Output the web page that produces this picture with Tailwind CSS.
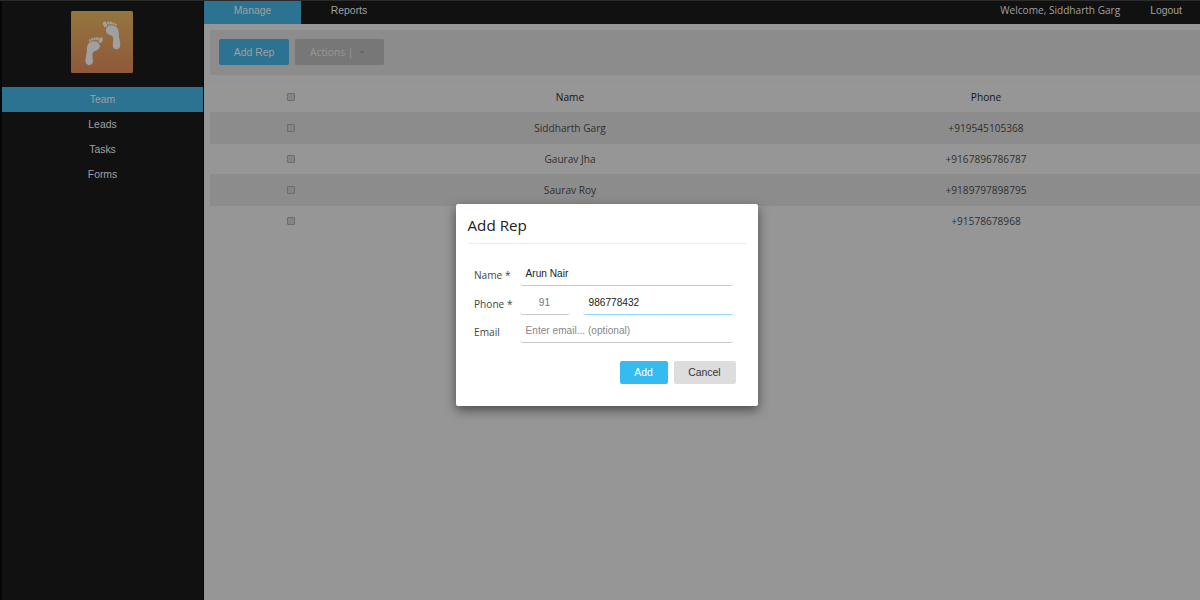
<!DOCTYPE html>
<html lang="en">
<head>
<meta charset="utf-8">
<title>Team</title>
<script src="https://cdn.jsdelivr.net/npm/@tailwindcss/browser@4"></script>
</head>
<body class="h-[600px] w-[1200px] overflow-hidden bg-[#969696] font-['Open_Sans',sans-serif] text-[10.15px] text-[#303030]">
<div class="flex h-full w-full border-t border-[#2b2b2b]">
  <aside class="flex w-[204px] shrink-0 flex-col border-l-2 border-r border-l-[#050505] border-r-[#050505] bg-[#111111] text-center font-['Liberation_Sans',sans-serif] text-[10.4px] text-[#a0a0a0]">
    <div class="flex h-[85.500px] justify-center pr-[1px] pt-[9.5px]">
      <svg class="h-[62px] w-[62px]" viewBox="0 0 62 62">
        <defs><linearGradient id="g" x1="0" y1="0" x2="0" y2="1"><stop offset="0" stop-color="#94763e"/><stop offset="1" stop-color="#90583a"/></linearGradient></defs>
        <rect width="62" height="62" rx="1.5" fill="url(#g)"/>
        <g fill="#a0a0a0">
          <g id="foot">
            <path d="M34.8 19.5C35 15.5 38 13.8 41.8 14.5C46.500 15.400 48 19 47.800 23C47.700 27 49.500 31 49.300 34.200C49.100 39.500 42.200 39.700 41.800 34.800C41.600 31.500 43.200 28 41.500 25.300C39.300 23.500 34.800 23.500 34.800 19.500Z"/>
            <ellipse cx="34" cy="13.300" rx="1.900" ry="2.900" transform="rotate(-18 34 13.300)"/>
            <ellipse cx="37.400" cy="12" rx="1.300" ry="1.700"/><ellipse cx="40.100" cy="12" rx="1.200" ry="1.500"/><ellipse cx="42.500" cy="12.600" rx="1.100" ry="1.400"/><ellipse cx="44.700" cy="13.800" rx="1" ry="1.300"/>
          </g>
          <use href="#foot" transform="matrix(-1 0 0 1 63.700 15.800)"/>
        </g>
      </svg>
    </div>
    <nav class="leading-[25.2px]">
      <div class="bg-[#2c7291]">Team</div>
      <div>Leads</div>
      <div>Tasks</div>
      <div>Forms</div>
    </nav>
  </aside>
  <main class="flex min-w-0 flex-1 flex-col">
    <header class="flex h-[22.500px] shrink-0 bg-[#111111] font-['Liberation_Sans',sans-serif] text-[10.4px] leading-[19px] text-[#a0a0a0]">
      <div class="w-[97px] bg-[#2c7291] text-center">Manage</div>
      <div class="w-[96px] text-center">Reports</div>
      <div class="ml-auto mr-[30px] font-['Open_Sans',sans-serif] text-[10.1px]">Welcome, Siddharth Garg</div>
      <div class="mr-[18px]">Logout</div>
    </header>
    <section class="ml-[6px] mt-[6.500px] flex h-[45px] shrink-0 gap-[6px] rounded-l-[3px] bg-[#8c8c8c] pl-[9px] pt-[9px]">
      <button class="h-[26px] w-[70px] rounded-[2px] bg-[#2c7291] pt-px font-['Liberation_Sans',sans-serif] text-[10.4px] text-[#a0a0a0]">Add Rep</button>
      <button class="flex h-[26px] w-[89px] items-center rounded-[2px] bg-[#777777] pl-[15px] pt-px text-[10.3px] text-[#979797]">Actions |
        <svg class="ml-[6px] h-[3px] w-[6px]" viewBox="0 0 6 3"><path d="M0 0H6L3 3Z" fill="#666"/></svg>
      </button>
    </section>
    <section class="ml-[6px] mt-[6px] overflow-hidden border-t border-[#8f9393] text-center">
      <div class="grid h-[30px] grid-cols-[162px_396px_436px] items-center font-medium text-[#151515]">
        <i class="mx-auto size-[8px] rounded-[1px] border border-[#6d6d6d] bg-[#858585]"></i><div class="pt-px">Name</div><div class="pt-px">Phone</div>
      </div>
      <div class="grid h-[32px] grid-cols-[162px_396px_436px] items-center bg-[#8c8c8c]">
        <i class="mx-auto size-[8px] rounded-[1px] border border-[#6d6d6d] bg-[#858585]"></i><div class="pt-px">Siddharth Garg</div><div class="pt-px">+919545105368</div>
      </div>
      <div class="grid h-[30px] grid-cols-[162px_396px_436px] items-center">
        <i class="mx-auto size-[8px] rounded-[1px] border border-[#6d6d6d] bg-[#858585]"></i><div class="pt-px">Gaurav Jha</div><div class="pt-px">+9167896786787</div>
      </div>
      <div class="grid h-[32px] grid-cols-[162px_396px_436px] items-center bg-[#8c8c8c]">
        <i class="mx-auto size-[8px] rounded-[1px] border border-[#6d6d6d] bg-[#858585]"></i><div class="pt-px">Saurav Roy</div><div class="pt-px">+9189797898795</div>
      </div>
      <div class="grid h-[30px] grid-cols-[162px_396px_436px] items-center">
        <i class="mx-auto size-[8px] rounded-[1px] border border-[#6d6d6d] bg-[#858585]"></i><div></div><div class="pt-px">+91578678968</div>
      </div>
    </section>
  </main>
</div>
<div role="dialog" class="absolute left-[455.500px] top-[204px] h-[202px] w-[302px] rounded-[2px] bg-white px-[12px] text-[#444] shadow-[0_4px_11px_rgba(0,0,0,0.5)]">
  <h1 class="h-[40px] border-b border-[#ececec] pt-[10px] text-[15.2px] font-medium leading-[22px] text-[#222]">Add Rep</h1>
  <form class="mt-[17px] flex flex-col gap-[3.5px] pl-[6.500px] pr-[13px]">
    <div class="flex h-[25px]">
      <label class="w-[45.500px] leading-[28px]">Name *</label>
      <div class="flex-1 rounded-[3px] border-b border-[#c8c8c8] pl-[6px] font-['Liberation_Sans',sans-serif] leading-[26px] text-[#222]">Arun Nair</div>
    </div>
    <div class="flex h-[25px]">
      <label class="w-[45.500px] leading-[28px]">Phone *</label>
      <div class="mr-[13px] w-[50px] rounded-[3px] border-b border-[#c8c8c8] text-center font-['Liberation_Sans',sans-serif] leading-[25px] text-[#777]">91</div>
      <div class="flex-1 rounded-[3px] border-b border-[#8fd8f8] pl-[6px] font-['Liberation_Sans',sans-serif] leading-[25px] text-[#222]">986778432</div>
    </div>
    <div class="flex h-[25px]">
      <label class="w-[45.500px] leading-[28px]">Email</label>
      <div class="flex-1 rounded-[3px] border-b border-[#c8c8c8] pl-[6px] font-['Liberation_Sans',sans-serif] leading-[26px] text-[#888]">Enter email... (optional)</div>
    </div>
  </form>
  <div class="mr-[10px] mt-[18px] flex justify-end gap-[6px] font-['Liberation_Sans',sans-serif] text-[10.4px]">
    <button class="h-[23px] w-[48px] rounded-[2px] bg-[#36bbf1] text-white">Add</button>
    <button class="h-[23px] w-[62px] rounded-[2px] bg-[#dddddd] text-[#333]">Cancel</button>
  </div>
</div>
</body>
</html>
